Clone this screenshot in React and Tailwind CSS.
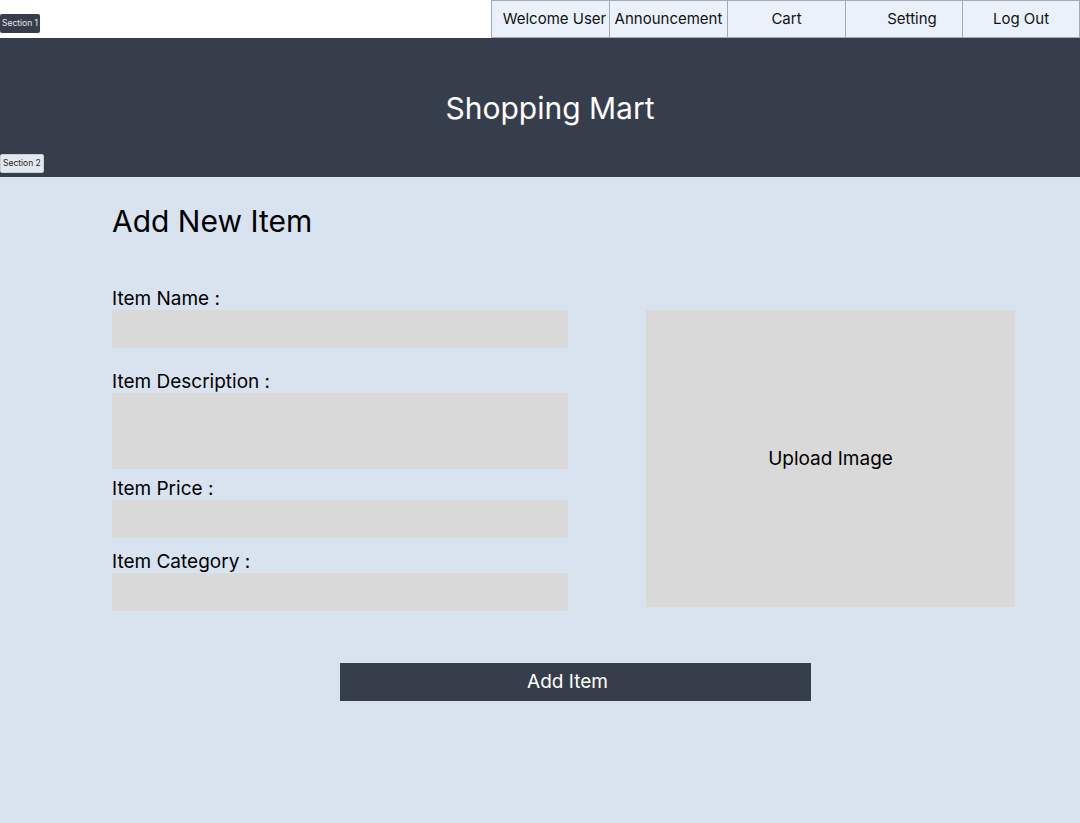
const navItems = [
  { label: "Welcome User", cls: "w-[119px] pl-[8px]" },
  { label: "Announcement", cls: "w-[119px]" },
  { label: "Cart", cls: "w-[119px]" },
  { label: "Setting", cls: "w-[118px] pl-4" },
  { label: "Log Out", cls: "w-[118px]" },
];

const Field = ({ label, tall, className = "" }) => (
  <div className={`flex flex-col ${className}`}>
    <label className="text-[19px] leading-[22px] text-black">{label}</label>
    <div className={`bg-[#d9d9d9] w-[456px] ${tall ? "h-[76px]" : "h-[38px]"}`} />
  </div>
);

const App = () => {
  return (
    <div className="min-h-[823px] bg-[#d9e3f0] font-['Inter','Liberation_Sans',sans-serif]">
      {/* top bar */}
      <div className="flex h-[38px] items-start justify-between bg-white">
        <span className="mt-[14px] rounded-[2px] bg-[#373e4b] px-[2px] py-[4px] text-[8.5px] leading-[11px] text-[#e5e7eb]">
          Section 1
        </span>
        <nav className="flex h-[38px]">
          {navItems.map((n) => (
            <button
              key={n.label}
              type="button"
              className={`h-[38px] border border-[#a3aab3] bg-[#eaf1fb] text-[15px] text-[#111] -ml-px first:ml-0 ${n.cls}`}
            >
              {n.label}
            </button>
          ))}
        </nav>
      </div>

      {/* header */}
      <header className="relative flex h-[139px] items-center justify-center bg-[#373e4b] pl-[20px]">
        <h1 className="text-[30px] leading-9 text-white">Shopping Mart</h1>
        <span className="absolute bottom-[4px] left-0 rounded-[2px] border border-[#c7ced8] bg-[#e4e9f1] px-[2px] py-[3px] text-[8.5px] leading-[11px] text-[#222]">
          Section 2
        </span>
      </header>

      {/* form */}
      <main className="px-[112px] pt-[26px]">
        <h2 className="text-[30px] leading-9 text-black">Add New Item</h2>

        <div className="mt-[49px] flex gap-[78px]">
          <div className="flex shrink-0 flex-col">
            <Field label="Item Name :" />
            <Field label="Item Description :" tall className="mt-[23px]" />
            <Field label="Item Price :" className="mt-[9px]" />
            <Field label="Item Category :" className="mt-[13px]" />
          </div>

          <div className="mt-[22px] flex h-[297px] w-[369px] shrink-0 items-center justify-center bg-[#d9d9d9] pt-[2px] text-[19px] text-black">
            Upload Image
          </div>
        </div>

        <div className="mt-[52px] flex">
          <button
            type="button"
            className="ml-[228px] h-[38px] w-[471px] bg-[#373e4b] pr-[16px] text-[19px] text-white"
          >
            Add Item
          </button>
        </div>
      </main>
    </div>
  );
};

export default App;
